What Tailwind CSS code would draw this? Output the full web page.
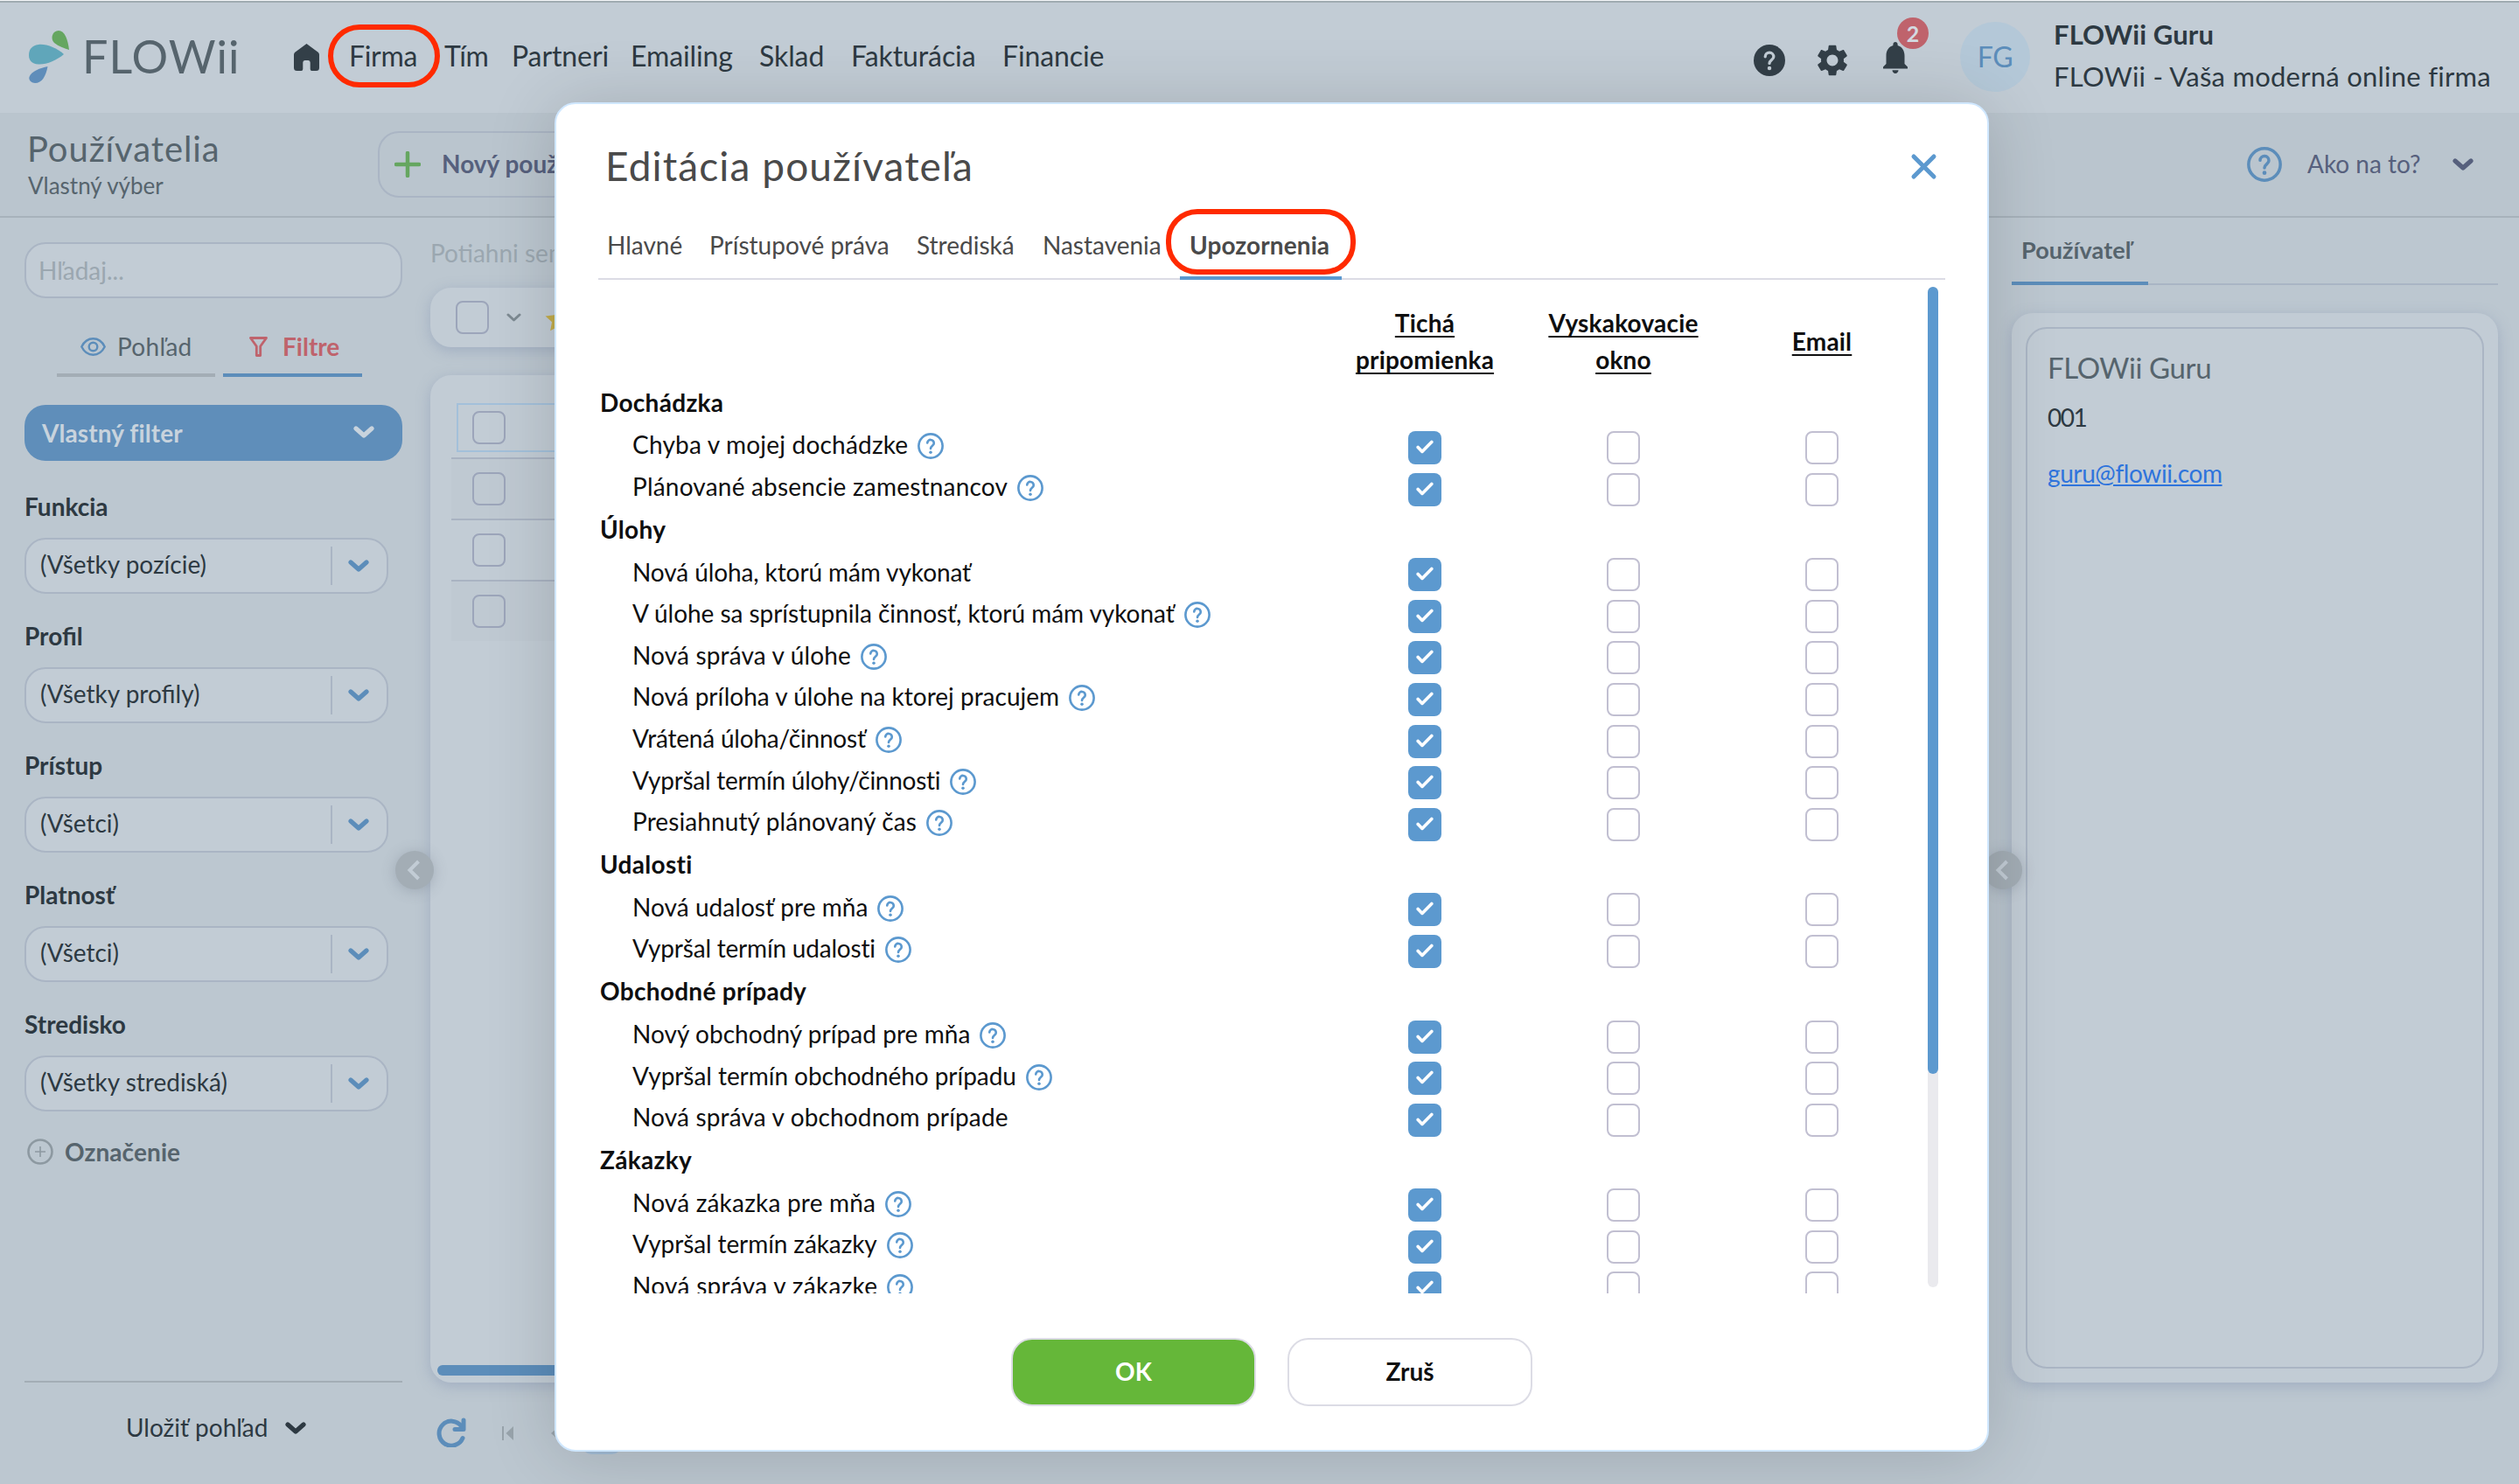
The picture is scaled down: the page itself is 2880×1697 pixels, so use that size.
<!DOCTYPE html>
<html lang="sk">
<head>
    <meta charset="utf-8">
    <title>FLOWii - Používatelia</title>
    <script src="https://cdn.jsdelivr.net/npm/@tailwindcss/browser@4"></script>
</head>
<body class="bg-[#bcc7d0] font-[Lato,sans-serif] text-[28px] leading-[34px] text-[#2d3942]">

<!-- Icon sprite -->
<svg class="hidden">
    <symbol id="help" viewBox="0 0 24 24">
        <g fill="none" stroke="currentColor" stroke-width="2.1" stroke-linecap="round">
            <circle cx="12" cy="12" r="10.900"/>
            <path d="M9 9.200a3 3 0 0 1 6 .3c0 2.200-3 2.400-3 4.900"/>
        </g>
        <circle cx="12" cy="17.800" r="1.400" fill="currentColor"/>
    </symbol>
    <symbol id="chevron" viewBox="0 0 24 14">
        <path d="M3 3l9 8 9-8" fill="none" stroke="currentColor" stroke-width="5.200" stroke-linecap="round" stroke-linejoin="round"/>
    </symbol>
    <symbol id="tick" viewBox="0 0 20 16">
        <path d="M2.200 8.400l4.800 5L17.800 2.400" fill="none" stroke="currentColor" stroke-width="3.600" stroke-linecap="round" stroke-linejoin="round"/>
    </symbol>
    <symbol id="collapse" viewBox="0 0 16 24">
        <path d="M13.500 2L3.500 12l10 10" fill="none" stroke="currentColor" stroke-width="4"/>
    </symbol>
</svg>

<div class="relative flex h-[1697px] w-[2880px] flex-col overflow-hidden">

    <!-- Top navigation -->
    <div class="h-px shrink-0 bg-[#f4f6f8]"></div>
    <header class="flex h-[128px] shrink-0 items-start border-t-2 border-[#9fabb1] bg-[#c2ccd5] pl-[33px]">
        <div class="flex w-[303px] items-start gap-[14px]">
            <svg class="mt-[32px] h-[60px] w-[47px] shrink-0" viewBox="0 0 47 60">
                <path fill="#65a660" d="M46 22C44.500 10 41 0 34 0C27 0 24 9 29 14C34 18 40 20 46 22Z"/>
                <path fill="#60a6ba" d="M40 27C32 20 20 15 11 16C3 17 0 22 0 28C0 34 3 38 11 38.500C20 39 32 34 40 27Z"/>
                <path fill="#5f8dba" d="M21.500 41C13 43 3 46 .500 53C-.500 57 3 60 7 60C15 60 19.500 52 21.500 41Z"/>
            </svg>
            <span class="mt-[35px] text-[52px] leading-[52px] tracking-[1.1px] text-[#56646d]">FLOWii</span>
        </div>
        <svg class="mt-[47px] h-[31px] w-[29px] shrink-0" viewBox="0 0 29 31">
            <path fill="#333f48" d="M14.500 0L1.300 9.800Q0 10.800 0 12.500V27.500Q0 31 3.500 31H8.500Q10.300 31 10.300 29V21.500Q10.300 19 12.500 19H16.500Q18.700 19 18.700 21.500V29Q18.700 31 20.500 31H25.500Q29 31 29 27.500V12.500Q29 10.800 27.700 9.800Z"/>
        </svg>
        <nav class="mt-[41px] ml-[34px] flex text-[32px] leading-[40px] tracking-[-0.1px] whitespace-nowrap">
            <a class="relative w-[109px] tracking-[-0.3px]">Firma
                <span class="absolute -top-[16px] -left-[24px] h-[72px] w-[128px] rounded-[36px] border-[6px] border-[#ff2a00]"></span>
            </a>
            <a class="w-[77px] tracking-[-0.4px]">Tím</a>
            <a class="w-[136px]">Partneri</a>
            <a class="w-[147px]">Emailing</a>
            <a class="w-[105px]">Sklad</a>
            <a class="w-[173px]">Fakturácia</a>
            <a>Financie</a>
        </nav>
        <div class="ml-auto flex w-[875px] items-start">
            <svg class="mt-[48px] h-[36px] w-[36px]" viewBox="0 0 24 24">
                <circle cx="12" cy="12" r="12" fill="#333f48"/>
                <path d="M8.800 9.200a3.200 3.200 0 0 1 6.400.1c0 2.300-3.200 2.400-3.200 5" fill="none" stroke="#c2ccd5" stroke-width="2.200" stroke-linecap="round"/>
                <circle cx="12" cy="18" r="1.500" fill="#c2ccd5"/>
            </svg>
            <svg class="mt-[48px] ml-[36px] h-[36px] w-[36px] text-[#333f48]" viewBox="2 2 20 20" fill="currentColor">
                <path d="M19.140 12.940c.04-.3.06-.61.06-.94 0-.32-.02-.64-.07-.94l2.030-1.580c.18-.14.23-.41.12-.61l-1.920-3.320c-.12-.22-.37-.29-.59-.22l-2.390.96c-.5-.38-1.030-.7-1.620-.94l-.36-2.540c-.04-.24-.24-.41-.48-.41h-3.840c-.24 0-.43.17-.47.41l-.36 2.540c-.59.24-1.130.57-1.620.94l-2.390-.96c-.22-.08-.47 0-.59.22L2.740 8.870c-.12.21-.08.47.12.61l2.030 1.580c-.05.3-.09.63-.09.94s.02.64.07.94l-2.030 1.580c-.18.14-.23.41-.12.61l1.920 3.320c.12.22.37.29.59.22l2.390-.96c.5.38 1.030.7 1.620.94l.36 2.540c.05.24.24.41.48.41h3.840c.24 0 .44-.17.47-.41l.36-2.540c.59-.24 1.130-.56 1.620-.94l2.390.96c.22.08.47 0 .59-.22l1.920-3.320c.12-.22.07-.47-.12-.61l-2.010-1.580zM12 15.600c-1.980 0-3.600-1.620-3.600-3.600s1.620-3.600 3.600-3.600 3.600 1.620 3.600 3.600-1.620 3.600-3.600 3.600z"/>
            </svg>
            <div class="relative mt-[45px] ml-[40px]">
                <svg class="h-[36px] w-[28px] text-[#333f48]" viewBox="4 2.500 16 19.500" preserveAspectRatio="none" fill="currentColor">
                    <path d="M12 22c1.100 0 2-.9 2-2h-4c0 1.100.89 2 2 2zm6-6v-5c0-3.070-1.640-5.640-4.500-6.320V4c0-.83-.67-1.500-1.500-1.500s-1.500.67-1.500 1.500v.68C7.630 5.360 6 7.920 6 11v5l-2 2v1h16v-1l-2-2z"/>
                </svg>
                <span class="absolute -top-[28px] left-[16px] flex size-[36px] items-center justify-center rounded-full bg-[#bf636c] text-[25px] font-bold text-[#d3dae1]">2</span>
            </div>
            <div class="mt-[22px] ml-[60px] flex size-[80px] items-center justify-center rounded-full bg-[#b4c8d8] text-[32px] tracking-[-0.5px] text-[#5c8dba]">FG</div>
            <div class="mt-[14px] ml-[27px] whitespace-nowrap">
                <div class="h-[48px] text-[31px] leading-[44px] font-bold tracking-[0.1px] text-[#2d3942]">FLOWii Guru</div>
                <div class="text-[31px] leading-[44px] tracking-[0.25px]">FLOWii - Vaša moderná online firma</div>
            </div>
        </div>
    </header>

    <!-- Page toolbar -->
    <div class="flex h-[120px] shrink-0 items-start border-b-2 border-[#a7b2bb] bg-[#bac5ce] pl-[31px] whitespace-nowrap">
        <div class="w-[401px] pt-[21px] text-[#56646d]">
            <div class="text-[40px] leading-[40px] tracking-[0.9px]">Používatelia</div>
            <div class="mt-[6px] pl-px text-[26px] leading-[32px]">Vlastný výber</div>
        </div>
        <div class="mt-[21px] flex h-[76px] w-[400px] items-center rounded-[24px] border-2 border-[#aab5c4] pb-[3px] pl-[17px] font-bold text-[#56607d]">
            <svg class="mt-[2px] mr-[24px] size-[30px]" viewBox="0 0 30 30">
                <path d="M15 2v26M2 15h26" stroke="#65a660" stroke-width="4.500" stroke-linecap="round"/>
            </svg>
            Nový používateľ
        </div>
        <div class="mt-[39px] ml-auto flex items-center pr-[52px] text-[#56607d]">
            <svg class="mr-[29px] size-[40px] text-[#5c8dba]"><use href="#help"/></svg>
            <span class="w-[166px] pb-[3px]">Ako na to?</span>
            <svg class="h-[14px] w-[24px]"><use href="#chevron"/></svg>
        </div>
    </div>

    <div class="flex min-h-0 flex-1">

        <!-- Filter sidebar -->
        <aside class="relative flex w-[492px] shrink-0 flex-col pl-[28px]">
            <div class="mt-[28px] h-[64px] w-[432px] shrink-0 rounded-[24px] border-2 border-[#aab5c4] bg-[#c2ccd5] pt-[13px] pl-[14px] text-[#9ba7b0]">Hľadaj...</div>
            <div class="mt-[22px] ml-[37px] flex gap-[9px]">
                <div class="flex h-[68px] w-[181px] items-center border-b-4 border-[#a3adb5] pt-[2px] pl-[27px] tracking-[0.3px] text-[#56646d]">
                    <svg class="mr-[13px] h-[21px] w-[29px] text-[#5c8dba]" viewBox="0 0 29 21" fill="none" stroke="currentColor" stroke-width="2.400">
                        <path d="M1.300 10.500C4 5 8.500 1.300 14.500 1.300S25 5 27.700 10.500C25 16 20.500 19.700 14.500 19.700S4 16 1.300 10.500Z"/>
                        <circle cx="14.500" cy="10.500" r="4.800"/>
                    </svg>
                    Pohľad
                </div>
                <div class="flex h-[68px] w-[159px] items-center border-b-4 border-[#5c8dba] pt-[2px] pl-[30px] font-bold text-[#bf636c]">
                    <svg class="mr-[17px] h-[23px] w-[21px]" viewBox="0 0 21 23" fill="none" stroke="currentColor" stroke-width="2.800" stroke-linejoin="round">
                        <path d="M1.500 1.500h18l-6.800 9.500v10.500h-4.400V11Z"/>
                    </svg>
                    Filtre
                </div>
            </div>
            <div class="mt-[32px] mb-[4px] flex h-[64px] w-[432px] shrink-0 items-center justify-between rounded-[24px] bg-[#5f8eba] pr-[32px] pl-[20px] font-bold tracking-[0.1px] text-[#c8d3dd]">
                Vlastný filter
                <svg class="mb-[2px] h-[14px] w-[24px]"><use href="#chevron"/></svg>
            </div>
            <div id="filters"></div>
            <div class="mt-[30px] flex h-[32px] items-center pl-[3px] font-bold tracking-[0.1px] text-[#56646d]">
                <svg class="mr-[13px] size-[30px]" viewBox="0 0 30 30" fill="none" stroke="#8d99a1">
                    <circle cx="15" cy="15" r="13.500" stroke-width="2.600"/>
                    <path d="M15 9v12M9 15h12" stroke-width="1.600"/>
                </svg>
                Označenie
            </div>
            <div class="mt-auto flex h-[118px] w-[432px] items-start border-t-2 border-[#a3adb5] pt-[34px] pl-[116px]">
                <span class="w-[182px]">Uložiť pohľad</span>
                <svg class="mt-[11px] h-[14px] w-[24px]"><use href="#chevron"/></svg>
            </div>
            <span class="absolute top-[724px] left-[452px] z-10 flex size-[44px] items-center justify-center rounded-full bg-[#a3adb5] text-[#c2ccd5] shadow-[0_2px_16px_rgba(90,100,115,0.3)]">
                <svg class="mr-[2px] h-[24px] w-[16px]"><use href="#collapse"/></svg>
            </span>
        </aside>

        <!-- Users list -->
        <main class="flex min-w-0 flex-1 flex-col pr-[32px]">
            <div class="mt-[23px] text-[#9ba7b0]">Potiahni sem stĺpec</div>
            <div class="mt-[23px] flex h-[68px] shrink-0 items-center rounded-[24px] bg-[#c2ccd5] pl-[29px] shadow-[0_4px_16px_rgba(110,125,165,0.35)]">
                <span class="size-[38px] rounded-[8px] border-2 border-[#9ca5ba]"></span>
                <svg class="ml-[20px] h-[10px] w-[17px] text-[#7d8a92]" viewBox="0 0 17 10">
                    <path d="M2 2l6.500 6L15 2" fill="none" stroke="currentColor" stroke-width="3" stroke-linecap="round" stroke-linejoin="round"/>
                </svg>
                <svg class="mt-[6px] ml-[27px] size-[30px]" viewBox="0 0 26 26">
                    <path fill="#c3ad4c" d="M13 0l3.700 8 8.800 1-6.500 6 1.700 8.700L13 19.400l-7.700 4.300L7 15 .5 9l8.800-1z"/>
                </svg>
            </div>
            <div class="mt-[32px] flex h-[1152px] shrink-0 flex-col rounded-[24px] bg-[#c2ccd5] pt-[26px] pl-[24px] shadow-[0_4px_16px_rgba(110,125,165,0.35)]">
                <div class="h-[70px] border-b-2 border-[#a9b3c2] pt-[6px] pl-[6px]">
                    <div class="flex h-[56px] items-center border-2 border-r-0 border-[#a3c0da] pl-[16px]">
                        <span class="size-[38px] rounded-[8px] border-2 border-[#9ca5ba]"></span>
                    </div>
                </div>
                <div class="flex h-[70px] items-center border-b-2 border-[#a9b3c2] bg-[#bfc9d2] pl-[24px]">
                    <span class="size-[38px] rounded-[8px] border-2 border-[#9ca5ba]"></span>
                </div>
                <div class="flex h-[70px] items-center border-b-2 border-[#a9b3c2] pl-[24px]">
                    <span class="size-[38px] rounded-[8px] border-2 border-[#9ca5ba]"></span>
                </div>
                <div class="flex h-[68px] items-center bg-[#bfc9d2] pl-[24px]">
                    <span class="size-[38px] rounded-[8px] border-2 border-[#9ca5ba]"></span>
                </div>
                <div class="mt-auto mb-[8px] -ml-[16px] h-[12px] w-[1200px] rounded-full bg-[#5c8dba]"></div>
            </div>
            <div class="mt-[40px] flex items-start">
                <svg class="ml-[7px] size-[34px] text-[#5c8dba]" viewBox="0 0 34 34" fill="none" stroke="currentColor" stroke-width="5" stroke-linecap="round" stroke-linejoin="round">
                    <path d="M30 23.500A14 14 0 1 1 28.500 10"/>
                    <path d="M31 3v10.500H21"/>
                </svg>
                <svg class="mt-[10px] ml-[41px] h-[16px] w-[13px]" viewBox="0 0 13 16" fill="#98a3ab"><path d="M0 0h2v16H0zM13 0v16L4.500 8z"/></svg>
                <svg class="mt-[10px] ml-[43px] h-[16px] w-[9px]" viewBox="0 0 9 16" fill="#98a3ab"><path d="M9 0v16L0 8z"/></svg>
                <span class="ml-[27px] h-[42px] w-[44px] rounded-[10px] bg-[#a3bdd6]"></span>
            </div>
        </main>

        <!-- User detail -->
        <aside class="relative w-[612px] shrink-0 pr-[24px] pl-[32px] text-[#56646d]">
            <div class="h-[77px] border-b-2 border-[#a9b5c4]">
                <div class="flex h-[77px] w-[156px] items-center border-b-4 border-[#5c8dba] pt-px pl-[11px] text-[27px] font-bold tracking-[0.1px]">Používateľ</div>
            </div>
            <div class="mt-[32px] h-[1223px] rounded-[24px] bg-[#c2ccd5] p-[16px] shadow-[0_4px_16px_rgba(110,125,165,0.35)]">
                <div class="h-full rounded-[24px] border-2 border-[#aab5c4] pt-[23px] pl-[23px]">
                    <div class="text-[33px] leading-[42px] tracking-[-0.4px]">FLOWii Guru</div>
                    <div class="mt-[19px] tracking-[-1.500px] text-[#2d3942]">001</div>
                    <a class="mt-[30px] inline-block tracking-[-0.4px] text-[#2f74dc] underline">guru@flowii.com</a>
                </div>
            </div>
            <span class="absolute top-[724px] left-0 flex size-[44px] items-center justify-center rounded-full bg-[#a3adb5] text-[#c2ccd5] shadow-[0_2px_16px_rgba(90,100,115,0.3)]">
                <svg class="mr-[2px] h-[24px] w-[16px]"><use href="#collapse"/></svg>
            </span>
        </aside>
    </div>

    <!-- Edit user dialog -->
    <div class="absolute top-[117px] left-[634px] z-20 flex h-[1543px] w-[1640px] flex-col rounded-[24px] border-2 border-[#cfe7ff] bg-white pr-[48px] pl-[48px] text-[#0f0f10] shadow-[0_4px_80px_rgba(0,0,0,0.16)]">
        <div class="mt-[43px] flex h-[56px] items-center justify-between pr-[9px] pl-[8px] text-[46px] tracking-[1.1px] text-[#4a4a4a]">
            Editácia používateľa
            <svg class="mt-px size-[31px]" viewBox="0 0 31 31">
                <path d="M4 4l23 23M27 4L4 27" stroke="#5c99cf" stroke-width="5" stroke-linecap="round"/>
            </svg>
        </div>
        <div class="mt-[44px] flex h-[58px] shrink-0 border-b-2 border-[#dcdce5] pl-[10px] text-[#4a4a4a]">
            <span class="w-[117px] pt-px">Hlavné</span>
            <span class="w-[237px] pt-px">Prístupové práva</span>
            <span class="w-[144px] pt-px">Strediská</span>
            <span class="w-[157px] pt-px">Nastavenia</span>
            <span class="relative h-[58px] w-[185px] border-b-4 border-[#5c99cf] pt-px pl-[11px] font-bold tracking-[0.1px]">Upozornenia
                <span class="absolute -top-[23px] -left-[16px] h-[75px] w-[217px] rounded-[36px] border-[6px] border-[#ff2a00]"></span>
            </span>
        </div>
        <div class="relative h-[1159px] shrink-0 overflow-hidden">
            <div class="grid h-[117.7px] grid-cols-[831.5px_227px_227px_227px] items-center pt-[23px] text-center leading-[42px] font-bold tracking-[0.2px] underline decoration-2 underline-offset-[4px]">
                <span></span>
                <span>Tichá<br>pripomienka</span>
                <span>Vyskakovacie<br>okno</span>
                <span>Email</span>
            </div>
            <div id="notifications"></div>
            <div class="absolute top-[8px] right-[8px] h-[1144px] w-[12px] rounded-full bg-[#eaeaee]">
                <div class="h-[900px] rounded-full bg-[#5c99cf]"></div>
            </div>
        </div>
        <div class="mt-[51px] flex justify-center gap-[36px] font-bold">
            <button class="h-[78px] w-[280px] rounded-[24px] border-2 border-[#dcdce5] bg-[#65b739] pb-[3px] text-white">OK</button>
            <button class="h-[78px] w-[280px] rounded-[24px] border-2 border-[#dcdce5] bg-white pb-[3px]">Zruš</button>
        </div>
    </div>
</div>

<script>
    var filters = [
        ["Funkcia", "(Všetky pozície)"],
        ["Profil", "(Všetky profily)"],
        ["Prístup", "(Všetci)"],
        ["Platnosť", "(Všetci)"],
        ["Stredisko", "(Všetky strediská)"]
    ];

    // Row: label, has a help icon, letter spacing in px
    var groups = [
        ["Dochádzka", [
            ["Chyba v mojej dochádzke", true, 0.2],
            ["Plánované absencie zamestnancov", true, 0.2]
        ]],
        ["Úlohy", [
            ["Nová úloha, ktorú mám vykonať", false, -0.1],
            ["V úlohe sa sprístupnila činnosť, ktorú mám vykonať", true, -0.05],
            ["Nová správa v úlohe", true, 0.15],
            ["Nová príloha v úlohe na ktorej pracujem", true, 0],
            ["Vrátená úloha/činnosť", true, -0.2],
            ["Vypršal termín úlohy/činnosti", true, -0.27],
            ["Presiahnutý plánovaný čas", true, 0.1]
        ]],
        ["Udalosti", [
            ["Nová udalosť pre mňa", true, 0.05],
            ["Vypršal termín udalosti", true, -0.2]
        ]],
        ["Obchodné prípady", [
            ["Nový obchodný prípad pre mňa", true, 0.05],
            ["Vypršal termín obchodného prípadu", true, -0.05],
            ["Nová správa v obchodnom prípade", false, 0.15]
        ]],
        ["Zákazky", [
            ["Nová zákazka pre mňa", true, 0.2],
            ["Vypršal termín zákazky", true, -0.1],
            ["Nová správa v zákazke", true, 0.3]
        ]]
    ];

    var html = "";
    filters.forEach(function (f) {
        html += `<div class="pt-[31px] pb-[19px] font-bold">${f[0]}</div>
            <div class="flex h-[64px] w-[416px] items-center rounded-[24px] border-2 border-[#aab5c4] bg-[#c2ccd5] pl-[16px]">
                <span class="flex-1 pb-[4px]">${f[1]}</span>
                <span class="h-[44px] w-[2px] bg-[#aab5c4]"></span>
                <svg class="mr-[20px] ml-[18px] h-[14px] w-[24px] text-[#5c8dba]"><use href="#chevron"/></svg>
            </div>`;
    });
    document.getElementById("filters").innerHTML = html;

    var help = '<svg class="mb-[2px] ml-[11px] size-[30px] text-[#5c99cf]"><use href="#help"/></svg>';
    var empty = '<span class="mt-px size-[38px] rounded-[8px] border-2 border-[#c1bfd1]"></span>';
    html = "";
    groups.forEach(function (g) {
        html += `<div class="h-[50px] pt-[5px] pl-[2px] font-bold tracking-[0.3px]">${g[0]}</div>`;
        g[1].forEach(function (row) {
            html += `<div class="grid h-[47.6px] grid-cols-[831.5px_227px_227px_227px] items-center justify-items-center">
                <div class="flex items-center justify-self-start pl-[39px] whitespace-nowrap"><span class="pb-[6px]" style="letter-spacing: ${row[2]}px">${row[0]}</span>${row[1] ? help : ""}</div>
                <span class="mt-px flex size-[38px] items-center justify-center rounded-[8px] bg-[#5c99cf] pb-[2px] text-white"><svg class="h-[16px] w-[20px]"><use href="#tick"/></svg></span>
                ${empty}${empty}
            </div>`;
        });
    });
    document.getElementById("notifications").innerHTML = html;
</script>
</body>
</html>
